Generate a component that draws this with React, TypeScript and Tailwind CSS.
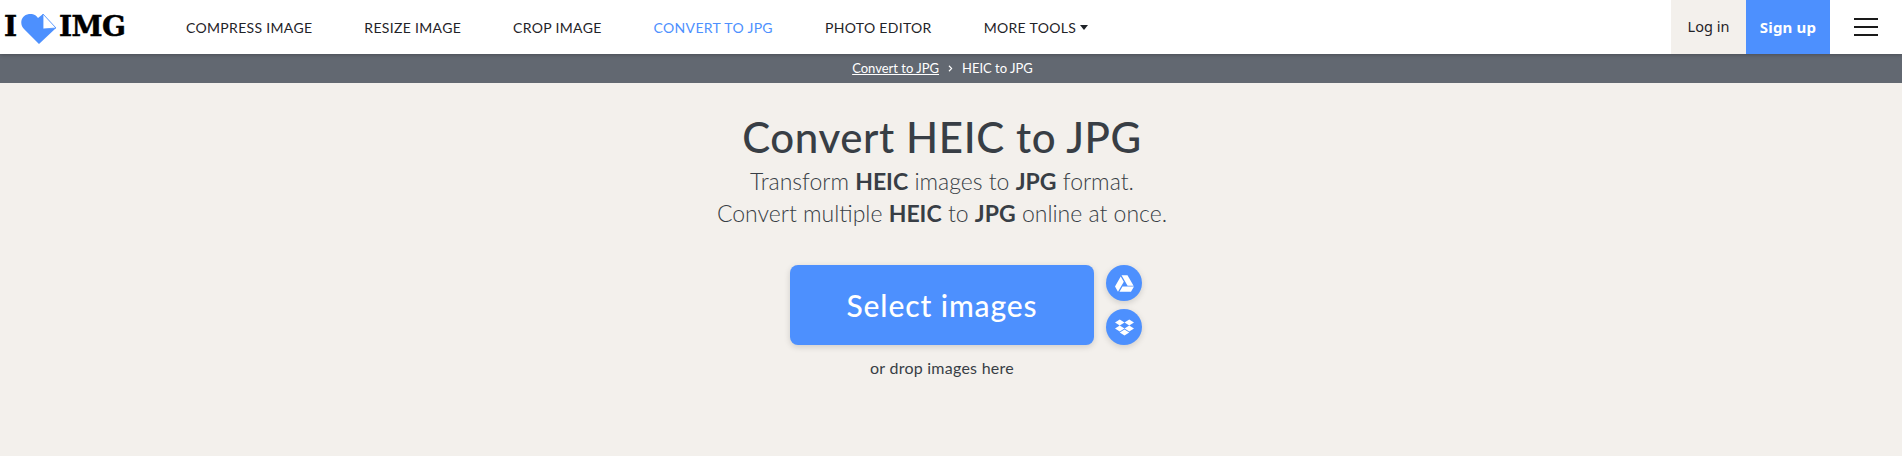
import React from 'react';
import { FaGoogleDrive, FaDropbox, FaChevronRight } from 'react-icons/fa';

const navItems = ['COMPRESS IMAGE', 'RESIZE IMAGE', 'CROP IMAGE', 'CONVERT TO JPG', 'PHOTO EDITOR'];

const Logo = () => (
  <div className="flex items-center pl-[4px] w-[186px] h-full shrink-0 text-black font-['DejaVu_Serif',serif] font-black text-[28px] leading-none [-webkit-text-stroke:0.5px_black]">
    <span>I</span>
    <svg width="36" height="30" viewBox="0 0 36 30" className="ml-[4px] mr-[2px] mt-[3px] shrink-0">
      <path d="M18 30 L3 15 C-2 10 0 1 8 0 C12 -0.5 15 1 17 4 L22 0 L35 14 Z" fill="#4d90fe" />
      <path d="M22 0 L35 14 L22 15 Z" fill="#fff" stroke="#4d90fe" strokeWidth="0.8" />
    </svg>
    <span className="tracking-[-0.6px]">IMG</span>
  </div>
);

export default function App() {
  return (
    <div className="min-h-[456px] bg-[#f3f0ec] font-['Lato',sans-serif] text-[#383e45]">
      {/* Top bar */}
      <header className="relative z-10 flex items-center h-[54px] bg-white shadow-[0_1px_4px_rgba(0,0,0,0.25)]">
        <Logo />
        <nav className="flex items-center gap-[52px] text-[14px] text-[#1f2328] tracking-[0.32px]">
          {navItems.map(item => (
            <a key={item} className={item === 'CONVERT TO JPG' ? 'text-[#4d90fe]' : ''}>{item}</a>
          ))}
          <a className="flex items-center gap-[4px]">
            MORE TOOLS
            <span className="w-0 h-0 border-x-[4px] border-x-transparent border-t-[5px] border-t-[#1f2328]" />
          </a>
        </nav>
        <div className="ml-auto flex items-stretch h-full font-['Noto_Sans',sans-serif]">
          <a className="flex items-center justify-center w-[75px] bg-[#f3f0ec] text-[#1f2328] text-[14.5px]">Log in</a>
          <a className="flex items-center justify-center w-[84px] bg-[#4d90fe] text-white text-[15px] font-bold tracking-[0.2px]">Sign up</a>
          <button className="flex flex-col justify-center items-center gap-[6px] w-[72px]">
            <span className="block w-[24px] h-[2px] bg-[#1a1a1a]" />
            <span className="block w-[24px] h-[2px] bg-[#1a1a1a]" />
            <span className="block w-[24px] h-[2px] bg-[#1a1a1a]" />
          </button>
        </div>
      </header>

      {/* Breadcrumb */}
      <div className="flex items-center justify-center gap-[8px] pr-[17px] h-[29px] bg-[#626871] text-white text-[13px]">
        <a className="underline">Convert to JPG</a>
        <FaChevronRight className="text-[7px]" />
        <span>HEIC to JPG</span>
      </div>

      {/* Tool header */}
      <main className="flex flex-col items-center pr-[18px]">
        <h1 className="mt-[27px] text-[42px] leading-[54px] font-medium tracking-[0.6px]">Convert HEIC to JPG</h1>
        <p className="mt-[1px] text-center text-[23px] leading-[32px] font-light">
          Transform <b className="font-bold">HEIC</b> images to <b className="font-bold">JPG</b> format.
          <br />
          Convert multiple <b className="font-bold">HEIC</b> to <b className="font-bold">JPG</b> online at once.
        </p>

        <div className="mt-[36px] flex gap-[12px] pl-[48px]">
          <button className="flex items-center justify-center w-[304px] h-[80px] rounded-lg bg-[#4d90fe] text-white text-[30px] font-medium tracking-[0.9px] shadow-[0_2px_6px_rgba(0,0,0,0.15)]">
            Select images
          </button>
          <div className="flex flex-col gap-[8px]">
            <a className="flex items-center justify-center w-[36px] h-[36px] rounded-full bg-[#4d90fe] text-white text-[19px] shadow-[0_2px_6px_rgba(0,0,0,0.15)]">
              <FaGoogleDrive />
            </a>
            <a className="flex items-center justify-center w-[36px] h-[36px] rounded-full bg-[#4d90fe] text-white text-[19px] shadow-[0_2px_6px_rgba(0,0,0,0.15)]">
              <FaDropbox />
            </a>
          </div>
        </div>
        <p className="mt-[13px] text-[16px] leading-[20px] tracking-[0.25px]">or drop images here</p>
      </main>
    </div>
  );
}
